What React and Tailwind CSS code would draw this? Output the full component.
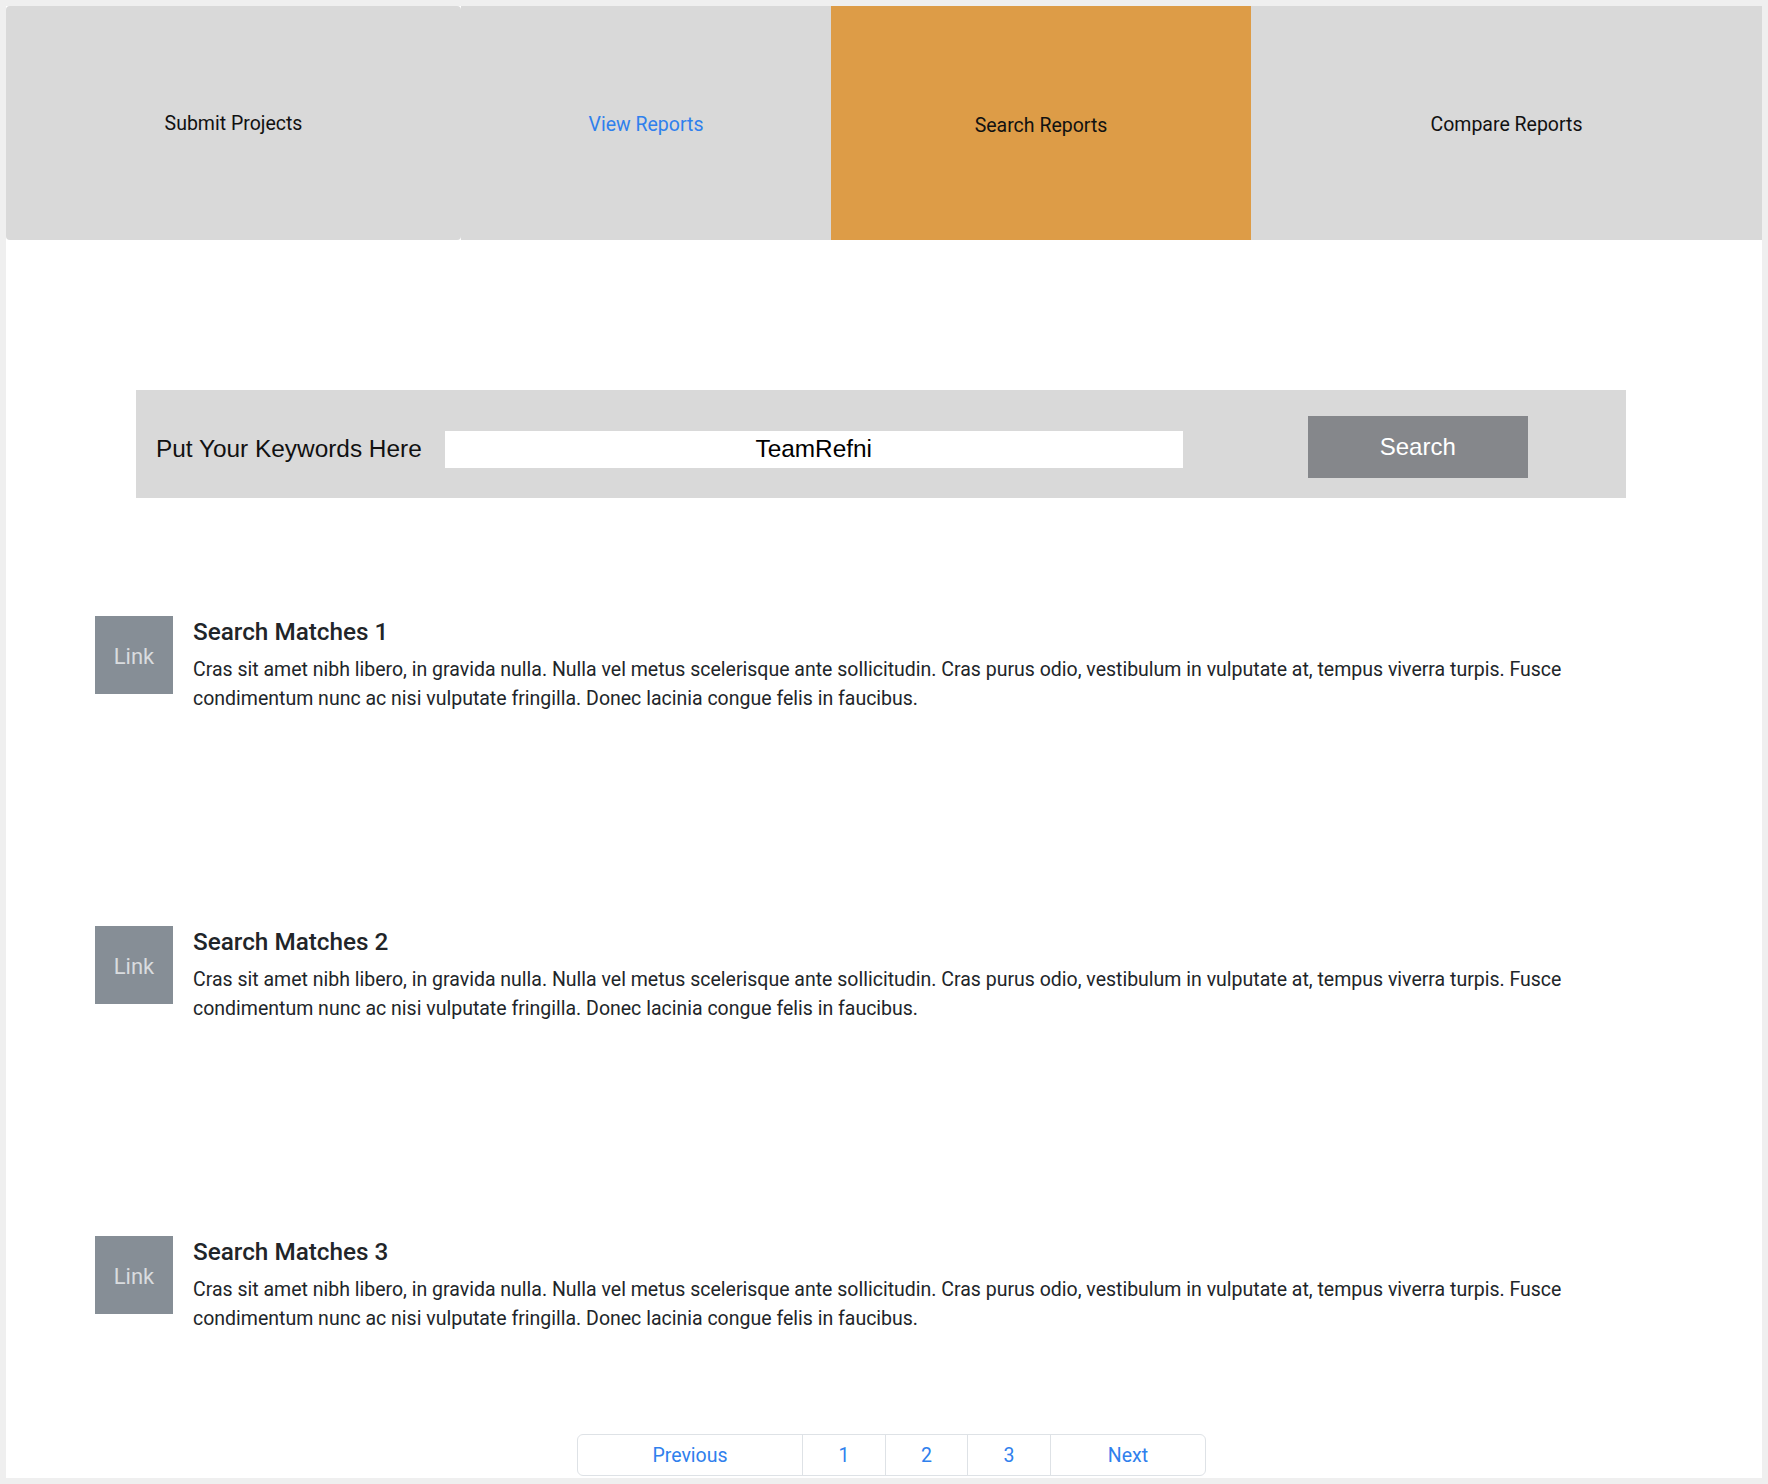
import React from "react";

const body =
  "Cras sit amet nibh libero, in gravida nulla. Nulla vel metus scelerisque ante sollicitudin. Cras purus odio, vestibulum in vulputate at, tempus viverra turpis. Fusce condimentum nunc ac nisi vulputate fringilla. Donec lacinia congue felis in faucibus.";

function Result({ n }) {
  return (
    <div className="flex items-start">
      <div className="w-[78px] h-[78px] shrink-0 bg-[#868e96] flex items-center justify-center pt-[3px] text-[22px] text-[#d9dcdf]">
        Link
      </div>
      <div className="ml-[20px] w-[1433px] text-[#212529]">
        <div className="mt-[1px] text-[24.3px] leading-[29px] font-medium">Search Matches {n}</div>
        <p className="mt-[9px] text-[19.5px] leading-[29px]">{body}</p>
      </div>
    </div>
  );
}

export default function App() {
  return (
    <div className="min-h-[1484px] bg-[#efefef] p-[6px] font-['Roboto',sans-serif]">
      <div className="bg-white h-[1472px] flex flex-col">
        <nav className="flex h-[234px] text-[19.5px] text-[#111]">
          <div className="w-[455px] bg-[#d9d9d9] rounded-[4px] flex items-center justify-center pt-[2px]">Submit Projects</div>
          <div className="w-[370px] bg-[#d9d9d9] flex items-center justify-center text-[#2f80ed] pt-[4px]">View Reports</div>
          <div className="w-[420px] bg-[#dd9c47] flex items-center justify-center pt-[5px]">Search Reports</div>
          <div className="w-[511px] bg-[#d9d9d9] flex items-center justify-center pt-[3px]">Compare Reports</div>
        </nav>

        <div className="ml-[130px] mt-[150px] w-[1490px] h-[108px] bg-[#d9d9d9] flex items-center font-['Liberation_Sans',Arial,sans-serif] text-[24.4px]">
          <span className="ml-[20px] mt-[10px] text-[#111]">Put Your Keywords Here</span>
          <div className="ml-[23px] mt-[11px] w-[738px] h-[37px] bg-white flex items-center justify-center text-black">
            TeamRefni
          </div>
          <div className="ml-[125px] mt-[6px] w-[220px] h-[62px] bg-[#85878b] flex items-center justify-center text-white text-[24px]">
            Search
          </div>
        </div>

        <div className="ml-[89px] mt-[118px] flex flex-col gap-[213px]">
          <Result n={1} />
          <Result n={2} />
          <Result n={3} />
        </div>

        <div className="mt-[101px] ml-[571px] flex h-[42px] w-[629px] border border-[#dee2e6] rounded-[6px] text-[19.5px] text-[#2f80ed]">
          <div className="w-[225px] flex items-center justify-center border-r border-[#dee2e6] pt-[1px]">Previous</div>
          <div className="w-[83px] flex items-center justify-center border-r border-[#dee2e6] pt-[1px]">1</div>
          <div className="w-[82px] flex items-center justify-center border-r border-[#dee2e6] pt-[1px]">2</div>
          <div className="w-[83px] flex items-center justify-center border-r border-[#dee2e6] pt-[1px]">3</div>
          <div className="flex-1 flex items-center justify-center pt-[1px]">Next</div>
        </div>
      </div>
    </div>
  );
}
